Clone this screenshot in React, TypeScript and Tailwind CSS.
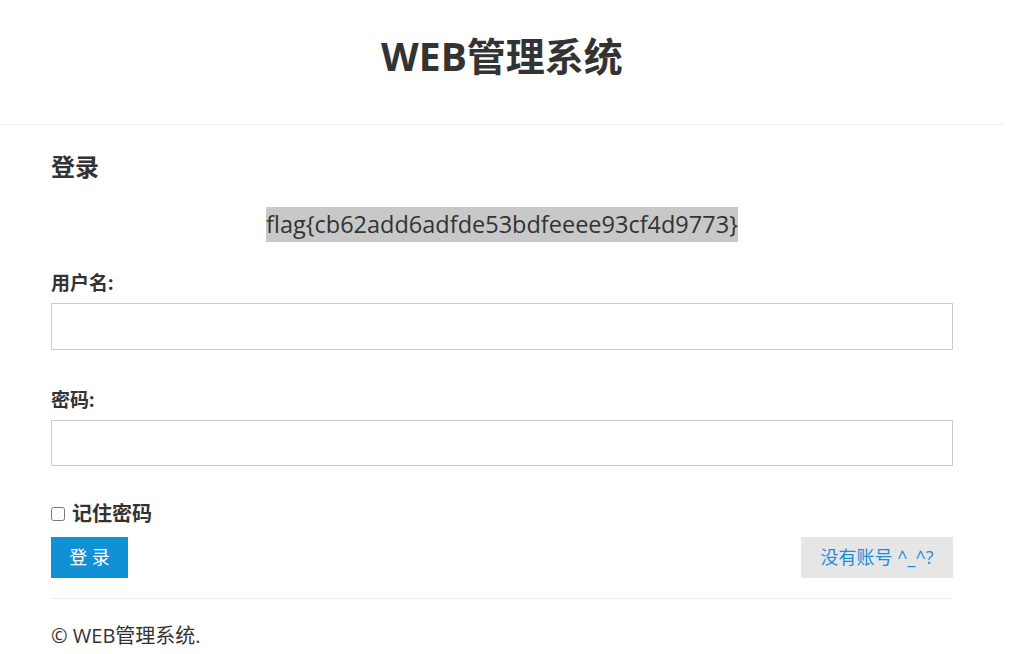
import React from "react";

const font = { fontFamily: '"Open Sans", "Noto Sans CJK SC", sans-serif' };

export default function App() {
  return (
    <div className="min-h-[654px] w-[1004px] bg-white text-[#333]" style={font}>
      <header className="flex h-[125px] items-center justify-center border-b border-[#eee]">
        <h1 className="pb-[14px] text-[39px] font-bold leading-none text-[#333]">WEB管理系统</h1>
      </header>
      <main className="px-[51px]">
        <h2 className="mt-[28px] text-[24px] font-bold leading-[28px]">登录</h2>
        <div className="mt-[26px] flex justify-center">
          <span className="inline-block h-[35px] bg-[#c8c8c8] text-[23.5px] leading-[35px]">flag{"{"}cb62add6adfde53bdfeeee93cf4d9773{"}"}</span>
        </div>
        <form className="mt-[29px]">
          <label className="block text-[19px] font-bold leading-[24px]">用户名:</label>
          <input className="mt-[8px] block h-[47px] w-full border border-[#ccc] px-3 outline-none" />
          <label className="mt-[38px] block text-[19px] font-bold leading-[24px]">密码:</label>
          <input type="password" className="mt-[8px] block h-[46px] w-full border border-[#ccc] px-3 outline-none" />
          <div className="mt-[35px] flex h-[26px] items-center">
            <input type="checkbox" className="h-[14px] w-[14px]" />
            <span className="ml-[7px] text-[20px] font-bold leading-[26px]">记住密码</span>
          </div>
          <div className="mt-[10px] flex items-center justify-between">
            <button type="button" className="h-[41px] w-[77px] bg-[#1190d6] text-[18px] text-white">登 录</button>
            <button type="button" className="h-[41px] w-[152px] bg-[#e6e6e6] text-[18px] text-[#1a8fd8]">没有账号 ^_^?</button>
          </div>
        </form>
        <div className="mt-[20px] border-t border-[#eee]" />
        <footer className="pt-[24px] text-[20px] leading-[26px]">© WEB管理系统.</footer>
      </main>
    </div>
  );
}
